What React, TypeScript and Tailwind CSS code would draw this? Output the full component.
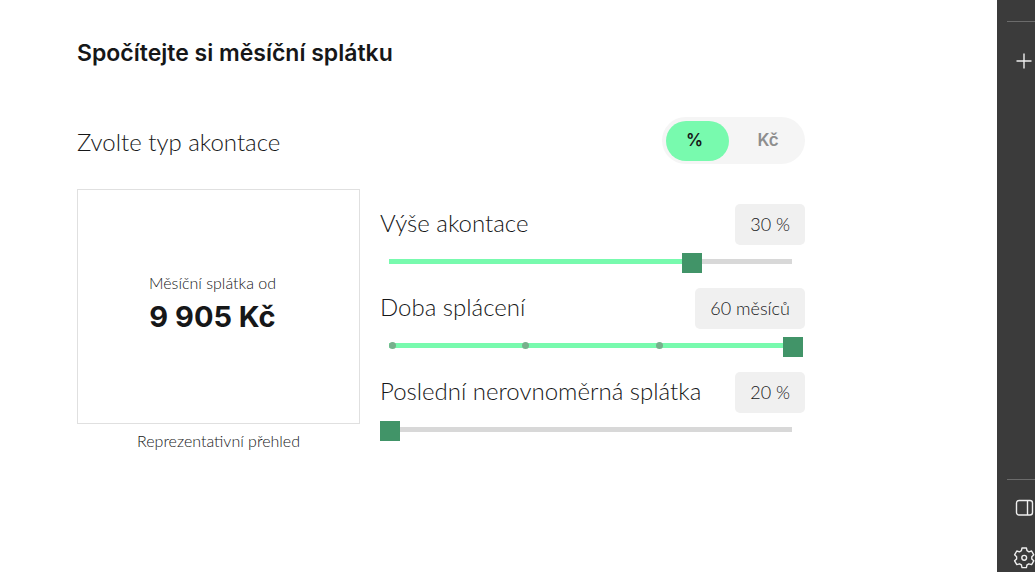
import { useState } from "react";

const light = "font-['Lato','Noto_Sans',sans-serif] font-light";
const bold = "font-['Inter','Liberation_Sans',sans-serif]";

type SliderProps = {
  id: string;
  label: string;
  unit: string;
  min: number;
  max: number;
  step: number;
  initial: number;
  stops?: boolean;
};

const sliders: SliderProps[] = [
  { id: "akontace", label: "Výše akontace", unit: "%", min: 0, max: 40, step: 5, initial: 30 },
  { id: "doba", label: "Doba splácení", unit: "měsíců", min: 24, max: 60, step: 12, initial: 60, stops: true },
  { id: "posledni", label: "Poslední nerovnoměrná splátka", unit: "%", min: 20, max: 50, step: 5, initial: 20 },
];

function Slider({ id, label, unit, min, max, step, initial, stops }: SliderProps) {
  const [value, setValue] = useState(initial);
  const percent = ((value - min) / (max - min)) * 100;

  return (
    <div className={light}>
      <div className="flex items-center justify-between">
        <label htmlFor={id} className="pb-1 text-[24px] leading-9 text-[#161718]">
          {label}
        </label>
        <output
          htmlFor={id}
          className="rounded-[5px] bg-[#f0f0f0] px-[15px] text-[18px] leading-[41px] text-[#161718]"
        >
          {value} {unit}
        </output>
      </div>
      <div className="relative mt-2 h-5">
        {/* Track */}
        <div className="absolute top-[6px] right-[13px] left-[9px] h-[5px] bg-[#d8d8d8]">
          <div className="h-full bg-[#78faae]" style={{ width: `${percent}%` }} />
        </div>
        {stops && (
          <div className="absolute top-[5px] right-[9px] left-[9px] flex justify-between">
            {[0, 1, 2, 3].map((stop) => (
              <span key={stop} className="size-[7px] rounded-full bg-[#77b08c]" />
            ))}
          </div>
        )}
        <div className="absolute inset-y-0 right-[2px] left-0">
          <input
            id={id}
            type="range"
            min={min}
            max={max}
            step={step}
            value={value}
            onChange={(e) => setValue(Number(e.target.value))}
            className="block h-5 w-full cursor-pointer appearance-none bg-transparent [&::-moz-range-thumb]:size-5 [&::-moz-range-thumb]:rounded-none [&::-moz-range-thumb]:border-0 [&::-moz-range-thumb]:bg-[#419468] [&::-webkit-slider-thumb]:size-5 [&::-webkit-slider-thumb]:appearance-none [&::-webkit-slider-thumb]:bg-[#419468]"
          />
        </div>
      </div>
    </div>
  );
}

function TypeSwitch() {
  const [type, setType] = useState("%");

  return (
    <div className="flex rounded-full bg-[#f5f5f5] px-1 pt-1 pb-[3px]">
      {["%", "Kč"].map((option) => (
        <button
          key={option}
          type="button"
          aria-pressed={type === option}
          onClick={() => setType(option)}
          className={`${bold} h-10 cursor-pointer rounded-full text-[17px] font-semibold ${
            type === option ? "w-[63px] bg-[#78faae] pr-[6px] text-[#161718]" : "w-[72px] pl-[6px] text-[#8e8e8e]"
          }`}
        >
          {option}
        </button>
      ))}
    </div>
  );
}

function Sidebar() {
  return (
    <aside className="flex w-[38px] shrink-0 flex-col justify-between overflow-hidden bg-[#3b3b3b] pl-[10px] text-[#eee]">
      <div className="mt-[21px] border-t border-[#6b6b6b] pt-[30px]">
        <button type="button" aria-label="Přidat" className="ml-2 block cursor-pointer">
          <svg width="18" height="18" viewBox="0 0 18 18" stroke="currentColor" strokeWidth="1.4">
            <path d="M9 1.5v15M1.5 9h15" />
          </svg>
        </button>
      </div>
      <div className="flex flex-col gap-[29px] border-t border-[#6b6b6b] pt-[18px] pb-[3px]">
        <button type="button" aria-label="Postranní panel" className="ml-2 block cursor-pointer">
          <svg width="20" height="20" viewBox="0 0 20 20" fill="none" stroke="currentColor" strokeWidth="1.4">
            <rect x="1.5" y="2.5" width="16" height="14.5" rx="2.5" />
            <path d="M12.5 2.5v14.5" />
          </svg>
        </button>
        <button type="button" aria-label="Nastavení" className="ml-[6px] block cursor-pointer">
          <svg width="22" height="22" viewBox="0 0 22 22" fill="none" stroke="currentColor" strokeWidth="1.4" strokeLinejoin="round">
            <path d="M9 1h4.4l.6 2.7 1.9 1.1 2.7-.8 2.2 3.8-2 1.9v2.2l2 1.9-2.2 3.8-2.7-.8-1.9 1.1-.6 2.7H9l-.6-2.7-1.9-1.1-2.7.8-2.2-3.8 2-1.9V9.7l-2-1.9L3.8 4l2.7.8 1.9-1.1z" />
            <circle cx="11.2" cy="10.8" r="2.4" />
          </svg>
        </button>
      </div>
    </aside>
  );
}

export default function App() {
  return (
    <div className="flex min-h-screen bg-white">
      <main className="min-w-0 flex-1 pt-[35px] pr-48 pl-[77px]">
        <h1 className={`${bold} text-[23px] leading-9 font-semibold text-[#161718]`}>
          Spočítejte si měsíční splátku
        </h1>

        <div className="mt-[46px] flex items-center justify-between">
          <h2 className={`${light} pt-[2px] text-[24px] leading-8 text-[#161718]`}>Zvolte typ akontace</h2>
          <TypeSwitch />
        </div>

        <div className="mt-[25px] flex gap-5">
          <figure className="w-[283px] shrink-0 text-center">
            <div className="flex h-[235px] flex-col items-center justify-center border border-[#e0e0e0] pr-3 pb-2">
              <p className={`${light} text-base leading-7 text-[#161718]`}>Měsíční splátka od</p>
              <p className={`${bold} text-[29px] leading-10 font-bold text-[#161718]`}>9 905 Kč</p>
            </div>
            <figcaption className={`${light} mt-[3px] text-base leading-7 text-[#161718]`}>
              Reprezentativní přehled
            </figcaption>
          </figure>

          <div className="flex min-w-0 flex-1 flex-col gap-[15px] pt-[15px]">
            {sliders.map((slider) => (
              <Slider key={slider.id} {...slider} />
            ))}
          </div>
        </div>
      </main>
      <Sidebar />
    </div>
  );
}
